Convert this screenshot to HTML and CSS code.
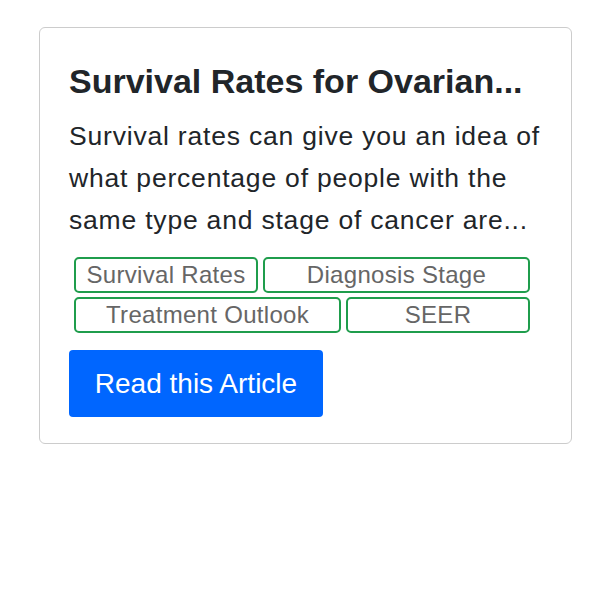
FILE: index.html
```html
<!DOCTYPE html>
<html>
<head>
<meta charset="utf-8">
<link rel="stylesheet" href="styles.css">
</head>
<body>
<div class="card">
  <h2 class="title">Survival Rates for Ovarian...</h2>
  <p class="text">Survival rates can give you an idea of what percentage of people with the same type and stage of cancer are...</p>
  <div class="tags">
    <span class="tag tag-sm">Survival Rates</span>
    <span class="tag tag-lg">Diagnosis Stage</span>
    <span class="tag tag-lg">Treatment Outlook</span>
    <span class="tag tag-sm">SEER</span>
  </div>
  <a class="btn" href="#">Read this Article</a>
</div>
</body>
</html>
```
FILE: styles.css
```css
* { box-sizing: border-box; }
body {
  margin: 0;
  padding: 27px 28px 0 39px;
  font-family: "Liberation Sans", Arial, sans-serif;
  color: #212529;
  background: #fff;
}
.card {
  border: 1px solid #cccccc;
  border-radius: 6px;
  padding: 33px 29px 26px 29px;
  width: 533px;
}
.title {
  margin: 0 0 14px 0;
  font-size: 34px;
  font-weight: bold;
  line-height: 40px;
  white-space: nowrap;
}
.text {
  margin: 0 0 16px 0;
  font-size: 26.5px;
  letter-spacing: 0.8px;
  line-height: 42px;
}
.tags {
  display: flex;
  flex-wrap: wrap;
  column-gap: 5px;
  row-gap: 4px;
  width: 456px;
  margin: 0 0 17px 5px;
}
.tag {
  border: 2px solid #1f9d4c;
  border-radius: 5px;
  font-size: 24px;
  letter-spacing: 0.3px;
  line-height: 32px;
  color: #666;
  text-align: center;
  white-space: nowrap;
}
.tag-sm { width: 184px; }
.tag-lg { width: 267px; }
.btn {
  display: inline-block;
  vertical-align: top;
  background: #0066ff;
  color: #fff;
  text-decoration: none;
  font-size: 28px;
  line-height: 67px;
  width: 254px;
  text-align: center;
  border-radius: 4px;
}
```
